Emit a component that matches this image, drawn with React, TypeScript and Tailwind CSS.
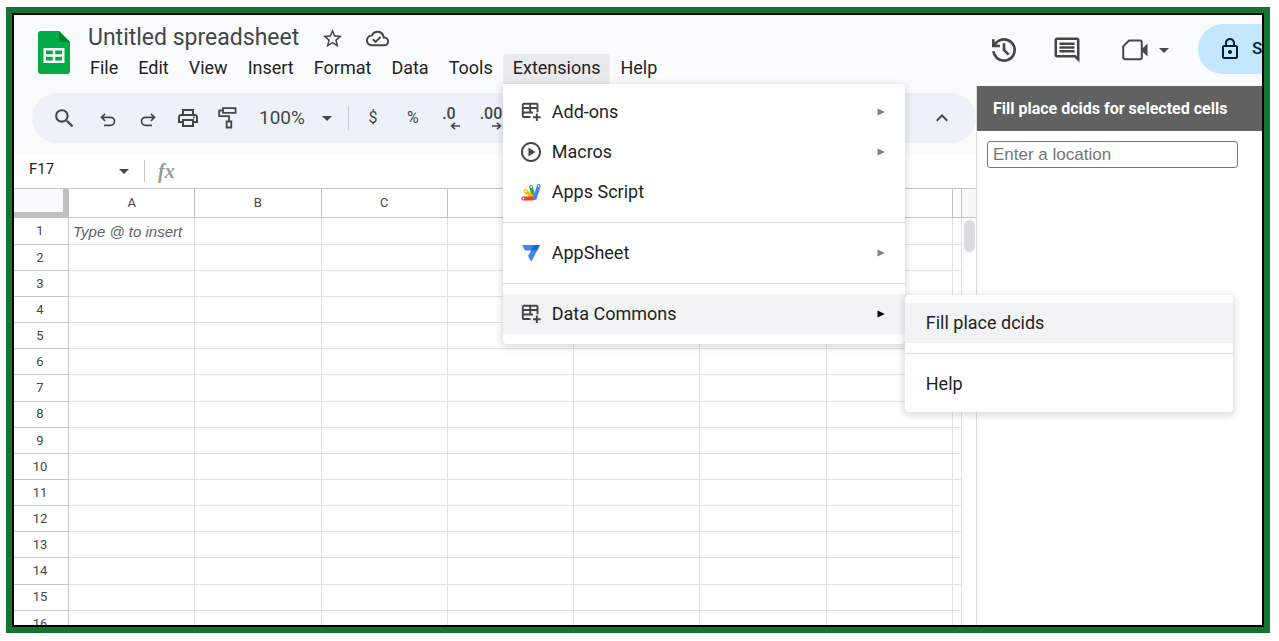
import type { ReactNode } from "react";
import {
  MdArrowDropDown,
  MdExpandLess,
  MdOutlineCloudDone,
  MdOutlineComment,
  MdOutlineLock,
  MdOutlinePlayCircle,
  MdOutlinePrint,
  MdSearch,
  MdStarBorder,
} from "react-icons/md";

const columns = ["A", "B", "C", "D", "E", "F", "G"];
const rows = Array.from({ length: 16 }, (_, i) => i + 1);

function SheetsLogo() {
  return (
    <svg viewBox="0 0 32 43" className="h-[43px] w-8" aria-hidden="true">
      <path d="M3 0H21L32 11V40a3 3 0 0 1-3 3H3a3 3 0 0 1-3-3V3a3 3 0 0 1 3-3z" fill="#00ac47" />
      <path d="M21 0L32 11H21z" fill="#00832d" />
      <path
        fillRule="evenodd"
        d="M5.500 17H26.500V32H5.500zM8 19.500V23.200H14.800V19.500zM17.200 19.500V23.200H24V19.500zM8 25.700V29.500H14.800V25.700zM17.200 25.700V29.500H24V25.700z"
        fill="#fff"
      />
    </svg>
  );
}

function HistoryIcon() {
  return (
    <svg viewBox="0 0 24 24" className="h-8 w-8" fill="currentColor" aria-hidden="true">
      <path d="M12 21q-3.450 0-6.012-2.287T3.050 13H5.100q.35 2.600 2.313 4.300T12 19q2.925 0 4.963-2.037T19 12t-2.037-4.962T12 5q-1.725 0-3.225.8T6.250 8H9v2H3V4h2v2.350q1.275-1.600 3.113-2.475T12 3q1.875 0 3.513.713t2.850 1.924 1.925 2.850T21 12t-.712 3.513-1.925 2.850-2.850 1.925T12 21m2.800-4.800L11 12.400V7h2v4.600l3.200 3.200z" />
    </svg>
  );
}

function UndoIcon({ flipped = false }: { flipped?: boolean }) {
  return (
    <svg
      viewBox="0 0 16 14"
      className={flipped ? "h-[14px] w-4 -scale-x-100" : "h-[14px] w-4"}
      fill="none"
      stroke="currentColor"
      strokeWidth="1.7"
      aria-hidden="true"
    >
      <path d="M5 .8L1.500 4.300L5 7.800M1.800 4.300H10.500a3.900 3.900 0 0 1 0 8H4" />
    </svg>
  );
}

function RollerIcon() {
  return (
    <svg viewBox="0 0 19 22" className="h-[22px] w-[19px]" fill="none" stroke="currentColor" strokeWidth="1.800" aria-hidden="true">
      <path d="M5 1.200H17.500V5.800H5zM5 3.500H1.200V9.200H11V14M8.600 14.500H13.300V20.500H8.600z" />
    </svg>
  );
}

function AddonIcon() {
  return (
    <svg viewBox="0 0 20 20" className="h-5 w-5" fill="none" stroke="currentColor" strokeWidth="1.900" aria-hidden="true">
      <path d="M9.500 15H2.800a1 1 0 0 1-1-1V2.800a1 1 0 0 1 1-1H15.500a1 1 0 0 1 1 1V10.300M1.800 6H16.500M1.800 10.500H12M9.200 1.800V10.500M15.800 11.500V19M12 15.200H19.600" />
    </svg>
  );
}

function AppsScriptIcon() {
  return (
    <svg viewBox="0 0 20 18" className="h-[18px] w-5" fill="none" strokeLinecap="round" strokeWidth="3.800" aria-hidden="true">
      <path d="M13 15L10 4" stroke="#34a853" />
      <path d="M12.500 15L4.500 8" stroke="#fbbc04" />
      <path d="M12 15.500H2.200" stroke="#ea4335" />
      <path d="M14 15L17.700 3" stroke="#4285f4" />
      <g fill="#fff">
        <circle cx="2.400" cy="15.500" r=".9" />
        <circle cx="4.700" cy="8.200" r=".9" />
        <circle cx="10.200" cy="4" r=".9" />
        <circle cx="17.600" cy="3.200" r=".9" />
      </g>
    </svg>
  );
}

function AppSheetIcon() {
  return (
    <svg viewBox="0 0 18 16" className="h-4 w-[18px]" aria-hidden="true">
      <path d="M0 0H18L10 15.500a1 1 0 0 1-1.700 0L6 11L9 5.500H3z" fill="#4285f4" />
      <path d="M9 5.500L12 0H18L15.200 5.500z" fill="#1967d2" />
    </svg>
  );
}

function DecimalButton({ label, digits, path }: { label: string; digits: string; path: string }) {
  return (
    <button aria-label={label} className="flex h-6 w-[42px] flex-col items-center">
      <span className="text-base leading-4 font-medium">{digits}</span>
      <svg viewBox="0 0 10 8" className="ml-3 h-2 w-[10px]" fill="none" stroke="currentColor" strokeWidth="1.600" aria-hidden="true">
        <path d={path} />
      </svg>
    </button>
  );
}

function SubmenuArrow({ active = false }: { active?: boolean }) {
  return (
    <svg viewBox="0 0 8 8" className={active ? "h-2 w-2 text-black" : "h-2 w-2 text-[#808080]"} aria-hidden="true">
      <path d="M.5 .5L7.800 4L.5 7.500z" fill="currentColor" />
    </svg>
  );
}

function MenuItem({ icon, label, submenu, active }: { icon?: ReactNode; label: string; submenu?: boolean; active?: boolean }) {
  return (
    <button
      role="menuitem"
      className={
        active
          ? "flex h-10 w-full items-center bg-[#f1f3f4] pr-5 pl-4 text-left"
          : "flex h-10 w-full items-center pr-5 pl-4 text-left"
      }
    >
      {icon && <span className="mr-[9px] flex w-6 justify-center text-[#444746]">{icon}</span>}
      <span className={icon ? "flex-1" : "flex-1 pl-[5px]"}>{label}</span>
      {submenu && <SubmenuArrow active={active} />}
    </button>
  );
}

function Divider() {
  return <div role="separator" className="my-[10px] h-px bg-[#dadce0]" />;
}

function MenuBar() {
  return (
    <nav className="flex pl-px text-lg leading-6 text-[#1f1f1f]">
      {["File", "Edit", "View", "Insert", "Format", "Data", "Tools"].map((name) => (
        <button key={name} className="h-[30px] px-[10px] pb-[2px]">
          {name}
        </button>
      ))}
      <div className="relative">
        <button aria-haspopup="menu" aria-expanded="true" className="h-[30px] rounded-t bg-[#e8eaed] px-[10px] pb-[2px]">
          Extensions
        </button>
        <div
          role="menu"
          className="absolute top-full left-0 z-20 w-[402px] rounded-b rounded-tr bg-white pt-2 pb-[10px] shadow-[0_2px_6px_2px_rgba(60,64,67,0.16)]"
        >
          <MenuItem icon={<AddonIcon />} label="Add-ons" submenu />
          <MenuItem icon={<MdOutlinePlayCircle size={24} />} label="Macros" submenu />
          <MenuItem icon={<AppsScriptIcon />} label="Apps Script" />
          <Divider />
          <MenuItem icon={<AppSheetIcon />} label="AppSheet" submenu />
          <Divider />
          <div className="relative">
            <MenuItem icon={<AddonIcon />} label="Data Commons" submenu active />
            <div
              role="menu"
              className="absolute top-px left-full w-[328px] rounded bg-white py-2 shadow-[0_2px_6px_2px_rgba(60,64,67,0.16)]"
            >
              <MenuItem label="Fill place dcids" active />
              <Divider />
              <MenuItem label="Help" />
            </div>
          </div>
        </div>
      </div>
      <button className="h-[30px] px-[10px] pb-[2px]">Help</button>
    </nav>
  );
}

function Header() {
  return (
    <header className="flex h-[71px] shrink-0 bg-[#f9fbfd] text-[#444746]">
      <div className="pt-4 pl-6">
        <SheetsLogo />
      </div>
      <div className="pt-[6px] pl-[9px]">
        <div className="flex h-[33px] items-center pl-[9px]">
          <h1 className="text-[23px] leading-7">Untitled spreadsheet</h1>
          <button aria-label="Star" className="ml-[22px] pt-[2px]">
            <MdStarBorder size={23} />
          </button>
          <button aria-label="Saved to Drive" className="ml-[22px] pt-[2px]">
            <MdOutlineCloudDone size={23} />
          </button>
        </div>
        <MenuBar />
      </div>
      <div className="ml-auto flex items-center pb-[2px]">
        <button aria-label="Version history">
          <HistoryIcon />
        </button>
        <button aria-label="Comments" className="ml-8">
          <MdOutlineComment size={30} />
        </button>
        <button aria-label="Join a call" className="ml-10 flex items-center gap-1">
          <svg viewBox="0 0 26 22" className="h-[22px] w-[26px]" aria-hidden="true">
            <path d="M7 1.500H18a1.800 1.800 0 0 1 1.800 1.800V18.500a1.800 1.800 0 0 1-1.800 1.800H3a1.800 1.800 0 0 1-1.800-1.800V7.300z" fill="none" stroke="currentColor" strokeWidth="2" />
            <path d="M19.800 10L25.500 4.500V17.500L19.800 12z" fill="currentColor" />
          </svg>
          <MdArrowDropDown size={24} />
        </button>
      </div>
      <div className="ml-[22px] w-16 overflow-hidden pt-[9px]">
        <button className="flex h-[50px] w-40 items-center gap-[10px] rounded-full bg-[#c2e7ff] pl-5 text-[17px] font-medium text-[#001d35]">
          <MdOutlineLock size={24} />
          Share
        </button>
      </div>
    </header>
  );
}

function Toolbar() {
  return (
    <div className="bg-[#f9fbfd] pt-[7px] pb-[10px] pl-[18px]">
      <div className="flex h-[50px] items-center rounded-full bg-[#edf2fa] pr-[22px] pl-5 text-[#444746]">
        <button aria-label="Search" className="w-[26px]">
          <MdSearch size={25} />
        </button>
        <button aria-label="Undo" className="ml-[22px] pt-1">
          <UndoIcon />
        </button>
        <button aria-label="Redo" className="ml-6 pt-1">
          <UndoIcon flipped />
        </button>
        <button aria-label="Print" className="ml-5">
          <MdOutlinePrint size={24} />
        </button>
        <button aria-label="Paint format" className="ml-[18px]">
          <RollerIcon />
        </button>
        <button aria-label="Zoom" className="ml-[22px] flex items-center gap-[10px] text-[19px]">
          100%
          <MdArrowDropDown size={24} />
        </button>
        <div className="mx-[9px] h-6 w-px bg-[#c7c7c7]" />
        <button className="w-[30px] text-base">$</button>
        <button className="ml-[10px] w-[30px] text-base">%</button>
        <DecimalButton label="Decrease decimal places" digits=".0" path="M10 4H1.500M5 .8L1.500 4L5 7.200" />
        <DecimalButton label="Increase decimal places" digits=".00" path="M0 4H8.500M5 .8L8.500 4L5 7.200" />
        <button aria-label="Hide the menus" className="ml-auto">
          <MdExpandLess size={24} />
        </button>
      </div>
    </div>
  );
}

function FormulaBar() {
  return (
    <div className="flex h-[35px] shrink-0 items-center bg-white pl-[15px] text-[#444746]">
      <span className="w-[83px] pb-[2px] text-[15px] text-[#1f1f1f]">F17</span>
      <button aria-label="Name box options">
        <MdArrowDropDown size={24} />
      </button>
      <div className="ml-2 h-[22px] w-px bg-[#c7c7c7]" />
      <span className="ml-[13px] font-['Liberation_Serif',serif] text-xl font-bold text-[#9a9a9a] italic">fx</span>
    </div>
  );
}

function Grid() {
  return (
    <div className="flex min-h-0 flex-1 overflow-hidden border-t border-[#c7c7c7]">
      <div className="min-w-0 flex-1">
        <table className="h-[448px] w-full table-fixed border-separate border-spacing-0 text-[13px] text-[#444746]">
          <thead>
            <tr>
              <th className="h-[29px] w-[55px] border-r-[6px] border-b-[6px] border-[#c0c0c0] bg-[#f8f9fa]" />
              {columns.map((name) => (
                <th key={name} className="border-r border-b border-[#c0c0c0] p-0 font-normal">
                  {name}
                </th>
              ))}
              <th className="w-[9px] border-r border-b border-[#c0c0c0]" />
            </tr>
          </thead>
          <tbody>
            {rows.map((row) => (
              <tr key={row}>
                <th className="border-r border-b border-[#c4c7c5] p-0 pr-[2px] font-normal">{row}</th>
                {columns.map((name) => (
                  <td
                    key={name}
                    className="border-r border-b border-[#e1e1e1] p-0 pt-[2px] pl-1 font-['Liberation_Sans',sans-serif] text-[15px] leading-[18px] text-[#5f6368] italic"
                  >
                    {row === 1 && name === "A" ? "Type @ to insert" : ""}
                  </td>
                ))}
                <td className="border-r border-b border-[#e1e1e1]" />
              </tr>
            ))}
          </tbody>
        </table>
      </div>
      <div className="w-[14px]">
        <div className="h-[29px] border-b border-[#c0c0c0] bg-[#f8f8f8]" />
        <div className="mx-auto mt-[2px] h-8 w-[11px] rounded-full bg-[#dadce0]" />
      </div>
    </div>
  );
}

function Sidebar() {
  return (
    <aside className="w-[286px] shrink-0 border-l border-[#dadce0] bg-white">
      <h2 className="flex h-[45px] items-center bg-[#616161] pl-4 text-base font-bold whitespace-nowrap text-white">
        Fill place dcids for selected cells
      </h2>
      <div className="pt-[10px] pr-6 pl-[10px]">
        <input
          aria-label="Location"
          placeholder="Enter a location"
          className="block h-[27px] w-full rounded-[3px] border border-[#767676] bg-white px-[5px] font-['Liberation_Sans',sans-serif] text-[17px] placeholder:text-[#757575]"
        />
      </div>
    </aside>
  );
}

export default function App() {
  return (
    <div className="h-screen bg-white pt-[7px] pr-[9px] pb-2 pl-[6px] font-[Roboto,sans-serif]">
      <div className="h-full border-[6px] border-[#137333]">
        <div className="flex h-full flex-col overflow-hidden border-2 border-black">
          <Header />
          <div className="flex min-h-0 flex-1">
            <main className="flex min-w-0 flex-1 flex-col">
              <Toolbar />
              <FormulaBar />
              <Grid />
            </main>
            <Sidebar />
          </div>
        </div>
      </div>
    </div>
  );
}
